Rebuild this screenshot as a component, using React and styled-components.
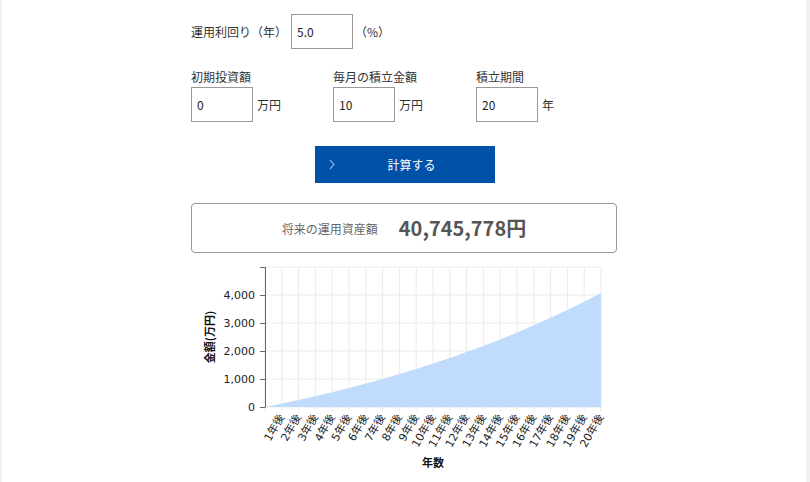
import React from 'react';
import styled, { createGlobalStyle } from 'styled-components';

const GlobalStyle = createGlobalStyle`
  html, body {
    margin: 0;
    padding: 0;
    background: #f1f1f1;
  }
  body {
    font-family: "Noto Sans CJK JP", sans-serif;
    color: #333;
  }
`;

const Page = styled.div`
  width: 804px;
  margin-left: 2px;
  min-height: 482px;
  background: #fff;
  overflow: hidden;
`;

const Calc = styled.div`
  width: 426px;
  margin: 0 auto;
  padding-top: 14px;
`;

const Row = styled.div`
  display: flex;
  align-items: center;
`;

const RateLabel = styled.span`
  width: 100px;
  font-size: 12px;
  line-height: 16px;
`;

const Grid = styled.div`
  display: grid;
  grid-template-columns: 142px 143px auto;
  margin-top: 20px;
`;

const FieldLabel = styled.div`
  font-size: 12px;
  line-height: 16px;
  margin-bottom: 2px;
`;

const Input = styled.input`
  box-sizing: border-box;
  width: 62px;
  height: 35px;
  border: 1px solid #999;
  border-radius: 0;
  padding: 0 5px;
  margin: 0;
  font-family: "Noto Sans CJK JP", sans-serif;
  font-size: 12px;
  color: #222;
  background: #fff;
  outline: none;
`;

const Unit = styled.span`
  margin-left: ${p => p.$gap || 4}px;
  font-size: 12px;
  line-height: 16px;
`;

const CalcButton = styled.button`
  position: relative;
  display: block;
  width: 180px;
  height: 37px;
  margin: 24px 0 0 124px;
  border: none;
  background: #0051a8;
  color: #fff;
  font-family: "Noto Sans CJK JP", sans-serif;
  font-size: 12px;
  padding: 0 0 0 13px;
  cursor: pointer;
`;

const Chevron = styled.svg`
  position: absolute;
  left: 14px;
  top: 13px;
`;

const ResultBox = styled.div`
  box-sizing: border-box;
  height: 50px;
  margin-top: 20px;
  border: 1px solid #999;
  border-radius: 4px;
  display: flex;
  align-items: center;
  justify-content: center;
  gap: 21px;
`;

const ResultLabel = styled.span`
  font-size: 12px;
  color: #666;
`;

const ResultValue = styled.span`
  font-size: 20px;
  font-weight: bold;
  color: #555;
  margin-top: -2px;
`;

const ChartSvg = styled.svg`
  display: block;
  margin-top: 5px;
`;

const AxisText = styled.text`
  font-family: "DejaVu Sans", "Noto Sans CJK JP", sans-serif;
  font-size: 11px;
  fill: #222;
`;

const TitleText = styled.text`
  font-family: "Noto Sans CJK JP", sans-serif;
  font-size: 11px;
  font-weight: bold;
  fill: #111;
`;

const Y0 = 149;
const X0 = 74;
const STEP = 16.8;
const PER = 28 / 1000;

const r = Math.pow(1.05, 1 / 12) - 1;
const values = Array.from({ length: 21 }, (_, n) =>
  n === 0 ? 0 : 10 * ((Math.pow(1.05, n) - 1) / r) * (1 + r)
);

function Chart() {
  const pts = values.map((v, i) => `${X0 + STEP * i},${Y0 - v * PER}`);
  const area = `M${X0},${Y0} L${pts.join(' L')} L${X0 + STEP * 20},${Y0} Z`;
  const yTicks = [0, 1000, 2000, 3000, 4000, 5000];

  return (
    <ChartSvg width="426" height="220" viewBox="0 0 426 220">
      {yTicks.map(t => (
        <line key={t} x1={X0} x2={X0 + STEP * 20} y1={Y0 - t * PER} y2={Y0 - t * PER} stroke="#ebebeb" />
      ))}
      {values.map((_, i) => (
        <line key={i} x1={X0 + STEP * i} x2={X0 + STEP * i} y1={9} y2={Y0 + 5} stroke="#ebebeb" />
      ))}
      <path d={area} fill="#c0dbfb" />
      <line x1={X0 + 0.5} x2={X0 + 0.5} y1={9} y2={Y0 + 0.5} stroke="#666" />
      {yTicks.map(t => (
        <line key={t} x1={X0 - 5} x2={X0} y1={Y0 - t * PER + 0.5} y2={Y0 - t * PER + 0.5} stroke="#666" />
      ))}
      {yTicks.slice(0, 5).map(t => (
        <AxisText key={t} x={X0 - 10} y={Y0 - t * PER + 4} textAnchor="end">
          {t.toLocaleString('en-US')}
        </AxisText>
      ))}
      {values.slice(1).map((_, i) => {
        const x = X0 + STEP * (i + 1) + 3;
        const y = Y0 + 10;
        return (
          <AxisText key={i} x={x} y={y} textAnchor="end" transform={`rotate(-60 ${x} ${y})`}>
            {i + 1}年後
          </AxisText>
        );
      })}
      <TitleText x="18" y="79" textAnchor="middle" dominantBaseline="central" transform="rotate(-90 18 79)">
        金額(万円)
      </TitleText>
      <TitleText x={X0 + STEP * 10} y="209" textAnchor="middle">
        年数
      </TitleText>
    </ChartSvg>
  );
}

export default function App() {
  return (
    <>
      <GlobalStyle />
      <Page>
        <Calc>
          <Row>
            <RateLabel>運用利回り（年）</RateLabel>
            <Input defaultValue="5.0" />
            <Unit $gap={2}>（%）</Unit>
          </Row>
          <Grid>
            <div>
              <FieldLabel>初期投資額</FieldLabel>
              <Row>
                <Input defaultValue="0" />
                <Unit>万円</Unit>
              </Row>
            </div>
            <div>
              <FieldLabel>毎月の積立金額</FieldLabel>
              <Row>
                <Input defaultValue="10" />
                <Unit>万円</Unit>
              </Row>
            </div>
            <div>
              <FieldLabel>積立期間</FieldLabel>
              <Row>
                <Input defaultValue="20" />
                <Unit>年</Unit>
              </Row>
            </div>
          </Grid>
          <CalcButton>
            <Chevron width="6" height="11" viewBox="0 0 6 11">
              <path d="M1 1 L5 5.5 L1 10" fill="none" stroke="#8fa9d6" strokeWidth="1.2" />
            </Chevron>
            計算する
          </CalcButton>
          <ResultBox>
            <ResultLabel>将来の運用資産額</ResultLabel>
            <ResultValue>40,745,778円</ResultValue>
          </ResultBox>
          <Chart />
        </Calc>
      </Page>
    </>
  );
}
